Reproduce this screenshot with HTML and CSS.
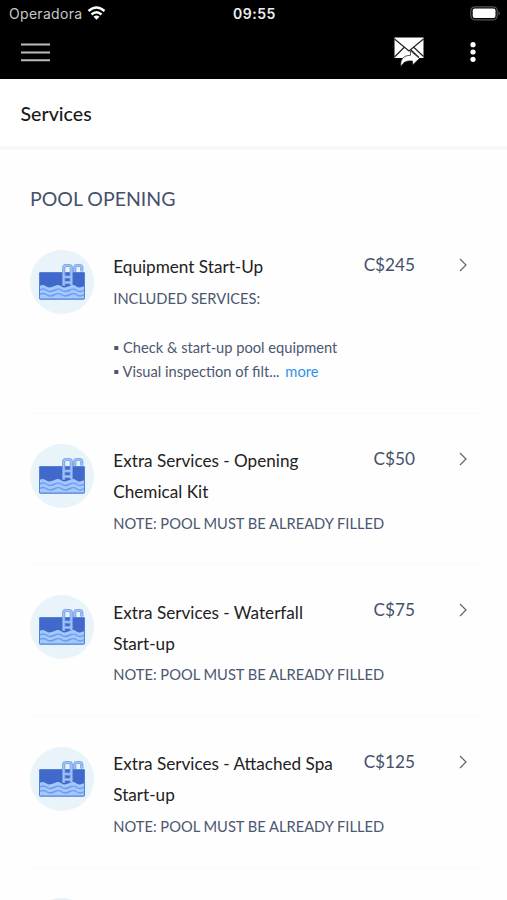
FILE: index.html
```html
<!DOCTYPE html>
<html lang="en">
<head>
<meta charset="utf-8">
<title>Services</title>
<link rel="stylesheet" href="styles.css">
</head>
<body>
<svg class="defs" aria-hidden="true">
  <symbol id="pool" viewBox="0 0 64 64">
    <circle cx="32" cy="32" r="32" fill="#e8f4fa"/>
    <rect x="9" y="22" width="46" height="27.500" rx="1.500" fill="#4069cb"/>
    <path d="M9.500 36c3-2 5-1 7 .5s5 1 8-.5 5-1 7 .5 5 1 8-.5 5-1 7 .5 5 1 8-.5V49h-45z" fill="#a2c8fd"/>
    <g fill="none" stroke="#6f9cea" stroke-width="1.400">
      <path d="M10 40c3-2 5-1 7 .5s5 1 8-.5 5-1 7 .5 5 1 8-.5 5-1 7 .5 5 1 7.500-.5"/>
      <path d="M10 44.500c3-2 5-1 7 .5s5 1 8-.5 5-1 7 .5 5 1 8-.5 5-1 7 .5 5 1 7.500-.5"/>
      <rect x="9.500" y="22.500" width="45" height="26.500" rx="1.200" stroke="#5480d8" stroke-width="1"/>
    </g>
    <g fill="none" stroke="#7ba2e9" stroke-width="3.200">
      <path d="M33.700 36V18q0-2.500 2.500-2.500h2.600q2.500 0 2.500 2.500v17"/>
      <path d="M44.700 22V18q0-2.500 2.500-2.500h2.100q2.500 0 2.500 2.500v3.500"/>
      <path d="M34 27h7M34 32.500h7"/>
    </g>
    <g fill="none" stroke="#a2c3f6" stroke-width="1.300">
      <path d="M33.700 35V18q0-2.500 2.500-2.500h2.600q2.500 0 2.500 2.500v17"/>
      <path d="M44.700 22V18q0-2.500 2.500-2.500h2.100q2.500 0 2.500 2.500v3"/>
      <path d="M34 27h7M34 32.500h7"/>
    </g>
  </symbol>
  <symbol id="chevron" viewBox="0 0 8 14"><path d="M1 1l6 6-6 6" fill="none" stroke="#646464" stroke-width="1.200"/></symbol>
</svg>

<header class="top">
  <div class="status">
    <div class="carrier"><span>Operadora</span>
      <svg class="wifi" viewBox="0 0 18 14" fill="none" stroke="#fff" stroke-width="2.400"><path d="M1 5q8-7 16 0M4 8.500q5-4.400 10 0"/><path d="M9 13.800l-3-3q3-2.400 6 0z" fill="#fff" stroke="none"/></svg>
    </div>
    <div class="clock">09:55</div>
    <svg class="battery" viewBox="0 0 31 15"><rect x=".8" y=".8" width="26.400" height="13" rx="4" fill="none" stroke="#555" stroke-width="1.200"/><rect x="2.700" y="2.600" width="22.800" height="9.400" rx="2" fill="#fff"/><path d="M28.600 5q2.400 2.300 0 4.600z" fill="#666"/></svg>
  </div>
  <nav class="bar">
    <svg class="menu" viewBox="0 0 29 20"><path d="M0 2.500h29M0 10.500h29M0 18.200h29" stroke="#bcbcbc" stroke-width="2"/></svg>
    <svg class="mail" viewBox="0 0 30 30"><path d="M.5.500h29v20.500H.5z" fill="#fff"/><path d="M.5 2l14.500 12L29.500 2M.5 20L10 10.500M20 10.500l9.500 9M17 13l8 7.500" fill="none" stroke="#222" stroke-width="1.200"/><path d="M7 29.800c-1.500-7 2.500-11.500 9.500-11.500v-4.300l9 7.500-7 6.500v-4c-6-.5-9.500 1-11.500 5.800z" fill="#fff" stroke="#111" stroke-width=".7"/></svg>
    <svg class="dots" viewBox="0 0 6 20" fill="#fff"><circle cx="3" cy="2.700" r="2.600"/><circle cx="3" cy="10" r="2.600"/><circle cx="3" cy="17.300" r="2.600"/></svg>
  </nav>
</header>

<h1 class="page-title">Services</h1>

<main class="list">
  <h2 class="section">POOL OPENING</h2>
  <article class="item">
    <svg class="pic"><use href="#pool"/></svg>
    <div class="info">
      <h3 class="name">Equipment Start-Up</h3>
      <p class="note long">INCLUDED SERVICES:<br><br>▪ Check &amp; start-up pool equipment<br>▪ Visual inspection of filt... <a class="more">more</a></p>
    </div>
    <div class="price">C$245</div>
    <svg class="chev"><use href="#chevron"/></svg>
  </article>
  <article class="item">
    <svg class="pic"><use href="#pool"/></svg>
    <div class="info">
      <h3 class="name">Extra Services - Opening<br>Chemical Kit</h3>
      <p class="note">NOTE: POOL MUST BE ALREADY FILLED</p>
    </div>
    <div class="price">C$50</div>
    <svg class="chev"><use href="#chevron"/></svg>
  </article>
  <article class="item">
    <svg class="pic"><use href="#pool"/></svg>
    <div class="info">
      <h3 class="name">Extra Services - Waterfall<br>Start-up</h3>
      <p class="note">NOTE: POOL MUST BE ALREADY FILLED</p>
    </div>
    <div class="price">C$75</div>
    <svg class="chev"><use href="#chevron"/></svg>
  </article>
  <article class="item">
    <svg class="pic"><use href="#pool"/></svg>
    <div class="info">
      <h3 class="name">Extra Services - Attached Spa<br>Start-up</h3>
      <p class="note">NOTE: POOL MUST BE ALREADY FILLED</p>
    </div>
    <div class="price">C$125</div>
    <svg class="chev"><use href="#chevron"/></svg>
  </article>
  <div class="item">
    <svg class="pic-edge" viewBox="0 0 64 2"><circle cx="32" cy="32" r="32" fill="#e8f0f4"/></svg>
  </div>
</main>
</body>
</html>
```
FILE: styles.css
```css
* { box-sizing: border-box; }
body {
  margin: 0;
  height: 900px;
  overflow: hidden;
  background: #fefefe;
  font-family: Lato, "Liberation Sans", sans-serif;
  color: #222;
}
svg { display: block; flex: none; }
h1, h2, h3, p { margin: 0; font-weight: 400; }
.defs { position: absolute; width: 0; height: 0; }
.top { height: 79px; background: #000; }
.status {
  display: grid;
  grid-template-columns: 1fr auto 1fr;
  align-items: center;
  height: 27px;
  padding: 0 6px 0 9px;
  font-family: Inter, sans-serif;
  font-size: 14px;
  color: #c8c8c8;
}
.carrier { display: flex; align-items: center; gap: 5px; letter-spacing: .3px; }
.wifi { width: 19px; height: 14px; margin-top: -1px; }
.clock { font-weight: 600; color: #eee; letter-spacing: .5px; margin-left: -1px; }
.battery { width: 31px; height: 15px; justify-self: end; }
.bar { display: flex; align-items: flex-start; padding: 10px 31px 0 21px; }
.menu { width: 29px; height: 20px; margin-top: 5px; }
.mail { width: 30px; height: 30px; margin-left: auto; }
.dots { width: 6px; height: 20px; margin: 5px 0 0 46px; }
.page-title {
  height: 71px;
  padding-left: 20.5px;
  border-bottom: 4px solid #f8f8f8;
  background: #fff;
  font-family: "Lato Medium", Lato, "Liberation Sans", sans-serif;
  font-size: 19.6px;
  font-weight: 600;
  line-height: 69px;
  color: #1a1a1a;
}
.list { height: 750px; padding: 0 28px 0 30px; overflow: hidden; }
.section { height: 70px; padding-top: 33px; font-size: 19.5px; line-height: 31px; color: #46506b; }
.item {
  display: flex;
  align-items: flex-start;
  padding: 30px 0 28.3px;
  border-bottom: 1px solid #f9f9f9;
}
.item:last-child { padding-bottom: 0; border: 0; }
.pic { width: 64px; height: 64px; }
.pic-edge { width: 64px; height: 2px; overflow: hidden; }
.info { flex: 1; min-width: 0; margin-left: 19.3px; padding-top: 1.2px; white-space: nowrap; }
.name { font-size: 17.15px; line-height: 31.3px; }
.note { font-size: 14.68px; line-height: 24.3px; padding-top: 4px; color: #4c5770; }
.note.long { padding-top: 5px; }
.more { margin-left: 2px; color: #2d93ea; }
.price { font-size: 17.2px; line-height: 30px; color: #46506b; }
.chev { width: 8px; height: 14px; margin: 8px 12px 0 44px; }
```
